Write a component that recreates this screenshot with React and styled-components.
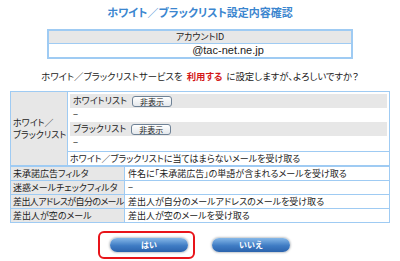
import React from "react";
import styled, { createGlobalStyle } from "styled-components";

const line = "#9fcbf3";
const shade = "#e7e7e7";

const GlobalStyle = createGlobalStyle`
  body {
    margin: 0;
    background: #fff;
    font-family: "Noto Sans CJK JP", "Noto Sans", sans-serif;
    font-feature-settings: "palt";
    color: #222;
  }
`;

const Page = styled.div`
  width: 400px;
  height: 261px;
  overflow: hidden;
  padding-top: 5px;
  box-sizing: border-box;
`;

const Title = styled.h1`
  margin: 0;
  text-align: center;
  font-size: 11px;
  line-height: 15px;
  font-weight: bold;
  color: #3b86cf;
`;

const AccountBox = styled.div`
  width: 306px;
  margin: 9px auto 0;
  border: 2px solid ${line};
  box-sizing: border-box;
`;

const AccountHead = styled.div`
  height: 12px;
  background: ${shade};
  border-bottom: 1px solid ${line};
  text-align: center;
  font-size: 9px;
  line-height: 12px;
`;

const AccountValue = styled.div`
  height: 13px;
  padding-left: 56px;
  text-align: center;
  font-family: "Liberation Sans", sans-serif;
  font-size: 11px;
  line-height: 13px;
`;

const Question = styled.p`
  margin: 11px 0 0;
  text-align: center;
  font-size: 9.4px;
  line-height: 12px;
`;

const Strong = styled.span`
  color: #d41818;
  font-weight: bold;
  margin: 0 4px;
`;

const Frame = styled.div`
  margin: 9px 10px 0;
  width: 380px;
  box-sizing: border-box;
  border: 1px solid ${line};
  font-size: 9px;
  line-height: 12px;
`;

const Section = styled.div`
  display: grid;
  grid-template-columns: 57px 1fr;
  border-bottom: 2px solid ${line};
`;

const Label = styled.div`
  background: ${shade};
  border-right: 1px solid ${line};
  padding: 0 2px;
  display: flex;
  align-items: center;
  white-space: nowrap;
  letter-spacing: ${(p) => (p.$tight ? "-0.6px" : "0")};
`;

const Value = styled.div`
  padding: 0 3px;
  display: flex;
  align-items: center;
  white-space: nowrap;
`;

const ListArea = styled.div`
  display: flex;
  flex-direction: column;
`;

const Lists = styled.div`
  padding: 2px 2px 1px;
`;

const ListHead = styled.div`
  height: 14px;
  background: ${shade};
  display: flex;
  align-items: center;
  gap: 5px;
  padding-left: 3px;
`;

const Dash = styled.div`
  height: 14px;
  padding-left: 3px;
  display: flex;
  align-items: center;
`;

const ShowButton = styled.button`
  width: 40px;
  height: 11px;
  padding: 0;
  border: 1px solid #6f8296;
  border-radius: 3px;
  background: linear-gradient(#ffffff, #e4e8ec);
  font-family: inherit;
  font-size: 8px;
  line-height: 9px;
  color: #222;
`;

const Note = styled.div`
  border-top: 1px solid ${line};
  height: 13px;
  padding-left: 2px;
  display: flex;
  align-items: center;
`;

const Row = styled.div`
  display: grid;
  grid-template-columns: 114px 1fr;
  height: 13px;
  border-top: ${(p) => (p.$first ? "none" : `1px solid ${line}`)};
`;

const ButtonRow = styled.div`
  display: flex;
  justify-content: center;
  gap: 24px;
  margin-top: 15px;
`;

const Highlight = styled.div`
  border: 2px solid #e8141a;
  border-radius: 6px;
  padding: 5px 5px 5px 10px;
  margin: -7px -7px -7px -12px;
`;

const Pill = styled.button`
  width: 78px;
  height: 14px;
  padding: 0;
  border: none;
  border-radius: 7px;
  background: linear-gradient(#86b8e8, #3f7cc4 55%, #2b63ad);
  box-shadow: 0 0 2px 1px #c4c8cc;
  color: #fff;
  font-family: inherit;
  font-size: 8px;
  font-weight: bold;
  line-height: 14px;
  display: block;
`;

const filters = [
  ["未承諾広告フィルタ", "件名に「未承諾広告」の単語が含まれるメールを受け取る"],
  ["迷惑メールチェックフィルタ", "−"],
  ["差出人アドレスが自分のメール", "差出人が自分のメールアドレスのメールを受け取る", true],
  ["差出人が空のメール", "差出人が空のメールを受け取る"],
];

export default function App() {
  return (
    <Page>
      <GlobalStyle />
      <Title>ホワイト／ブラックリスト設定内容確認</Title>
      <AccountBox>
        <AccountHead>アカウントID</AccountHead>
        <AccountValue>@tac-net.ne.jp</AccountValue>
      </AccountBox>
      <Question>
        ホワイト／ブラックリストサービスを<Strong>利用する</Strong>に設定しますが、よろしいですか？
      </Question>
      <Frame>
        <Section>
          <Label>
            ホワイト／
            <br />
            ブラックリスト
          </Label>
          <ListArea>
            <Lists>
              <ListHead>
                ホワイトリスト<ShowButton>非表示</ShowButton>
              </ListHead>
              <Dash>−</Dash>
              <ListHead>
                ブラックリスト<ShowButton>非表示</ShowButton>
              </ListHead>
              <Dash>−</Dash>
            </Lists>
            <Note>ホワイト／ブラックリストに当てはまらないメールを受け取る</Note>
          </ListArea>
        </Section>
        <div>
          {filters.map(([label, value, tight], i) => (
            <Row key={label} $first={i === 0}>
              <Label $tight={tight}>{label}</Label>
              <Value>{value}</Value>
            </Row>
          ))}
        </div>
      </Frame>
      <ButtonRow>
        <Highlight>
          <Pill>はい</Pill>
        </Highlight>
        <Pill>いいえ</Pill>
      </ButtonRow>
    </Page>
  );
}
